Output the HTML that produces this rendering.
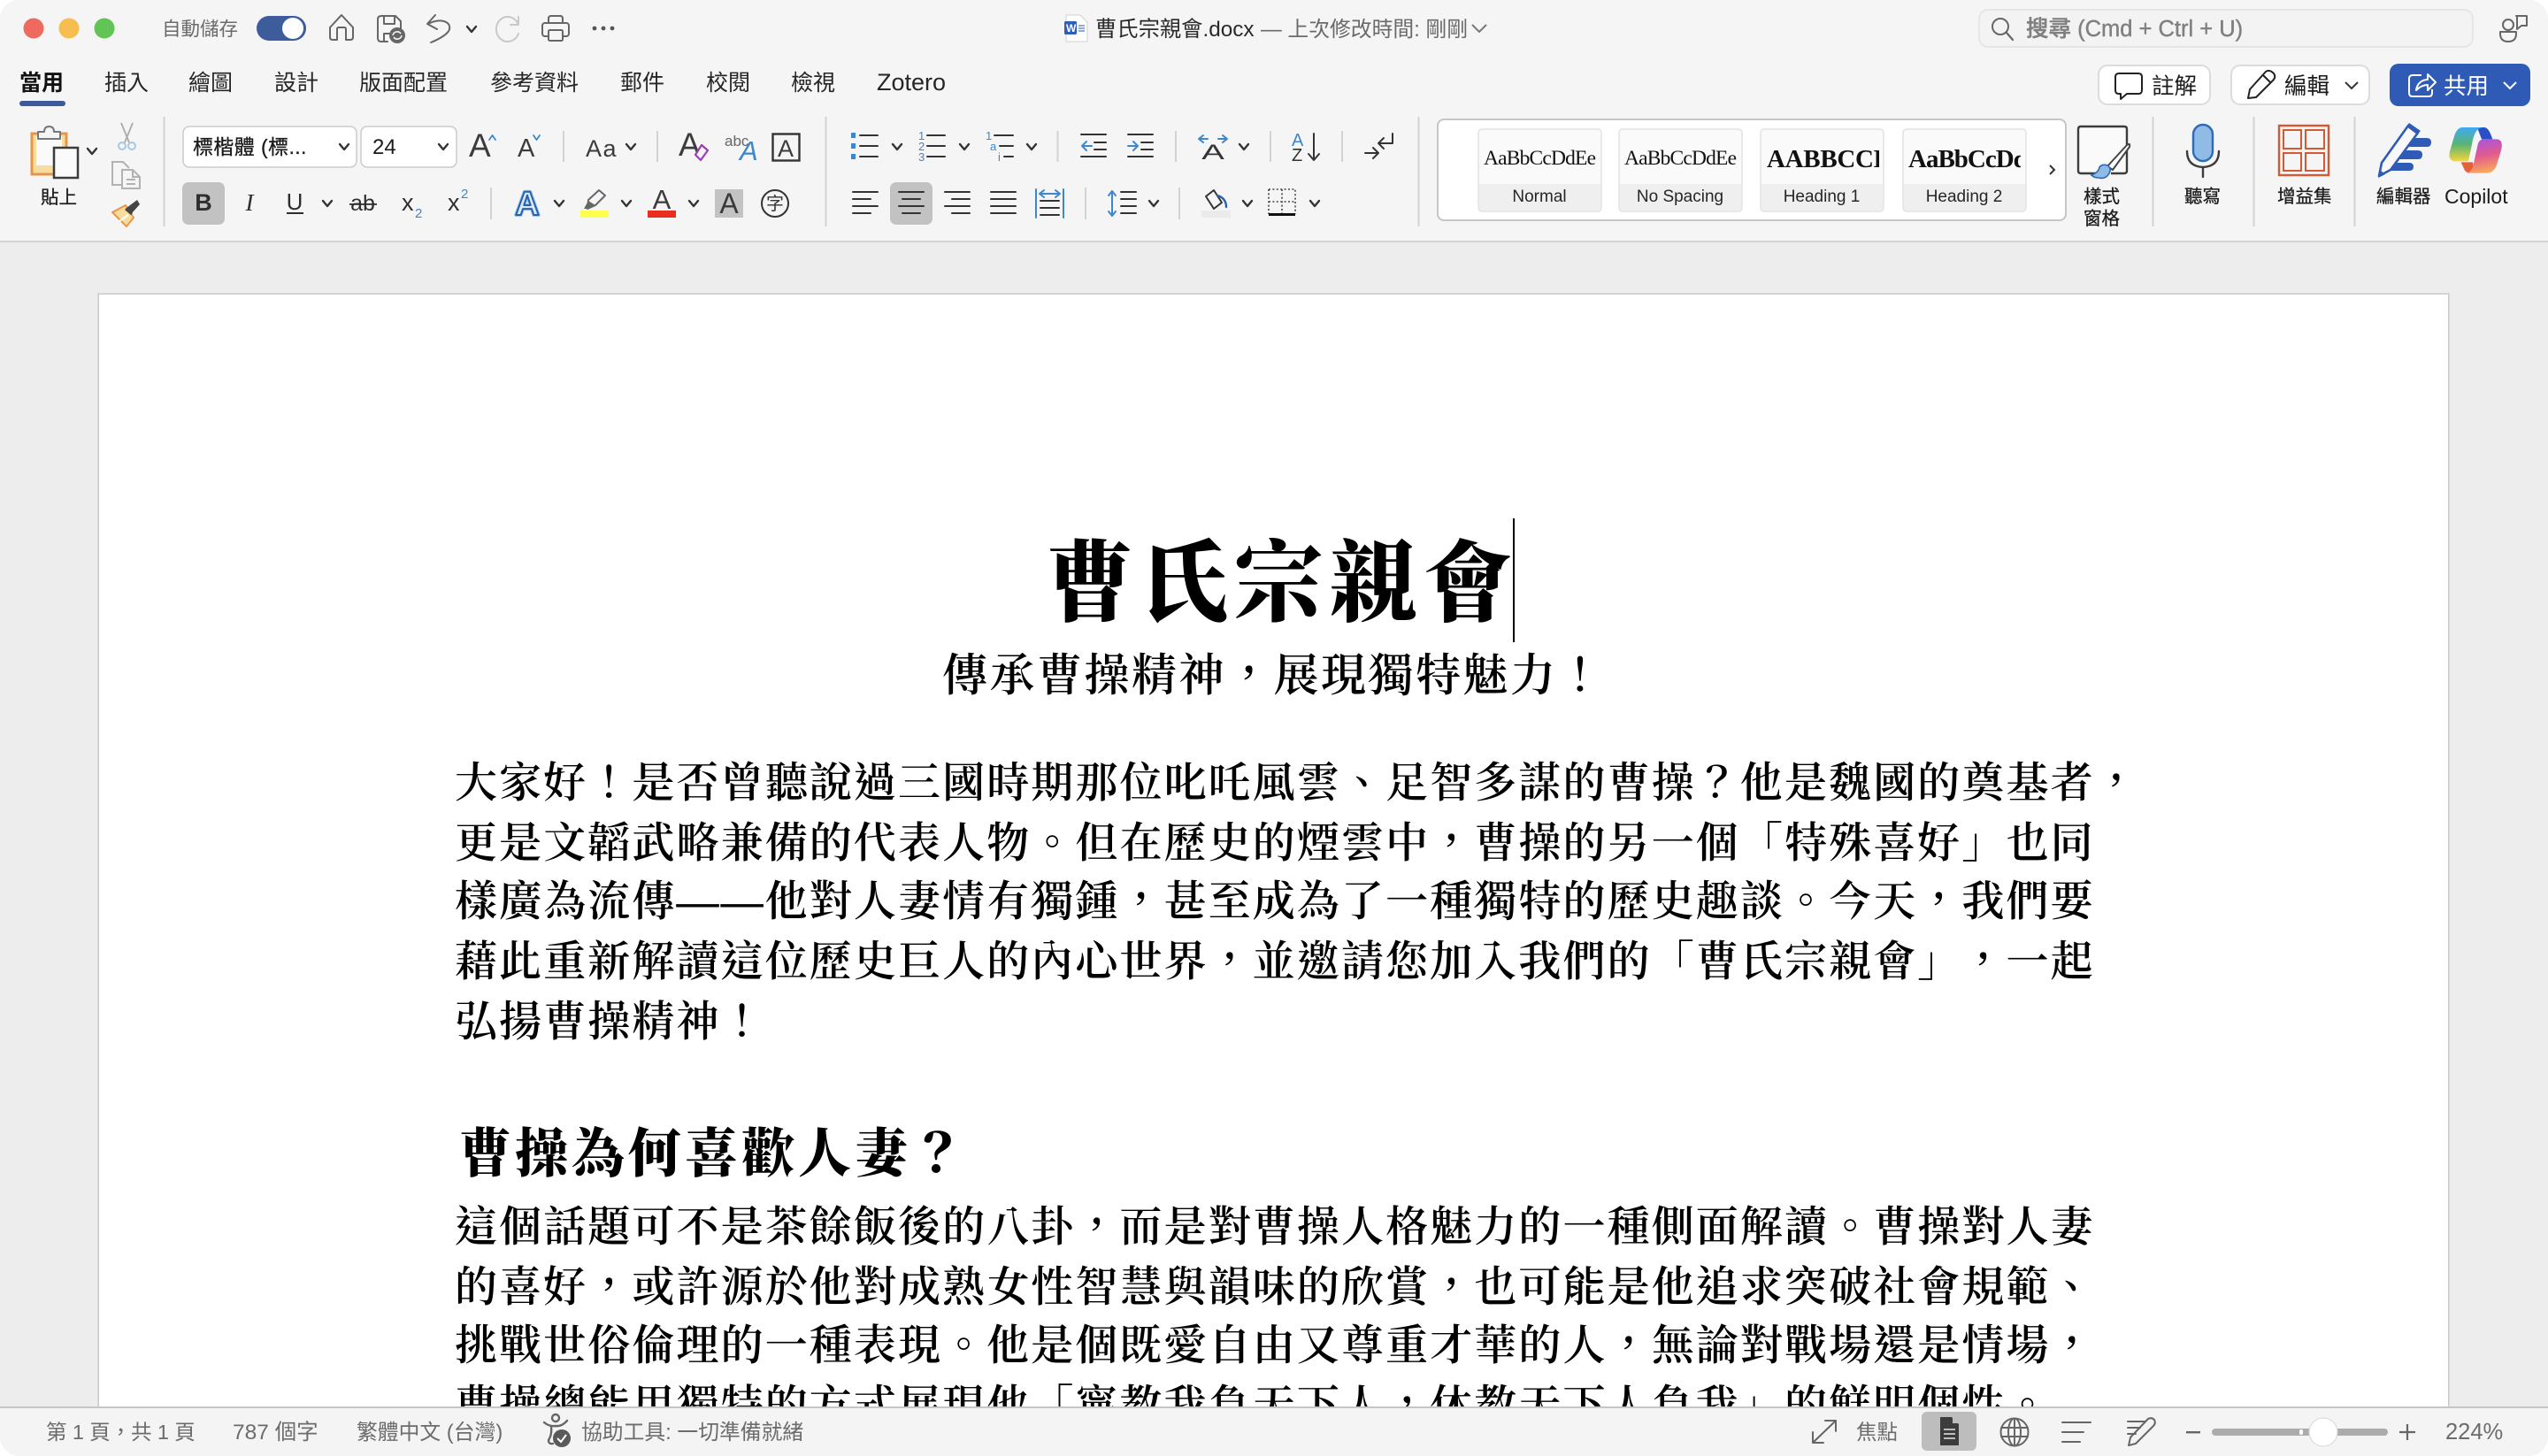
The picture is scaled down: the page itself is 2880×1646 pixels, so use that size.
<!DOCTYPE html>
<html lang="zh-TW">
<head>
<meta charset="utf-8">
<title>曹氏宗親會.docx</title>
<style>
html,body{margin:0;padding:0;width:2880px;height:1646px;overflow:hidden;background:#fff}
#win{position:absolute;left:0;top:0;width:2880px;height:1646px;background:#ededed;border-radius:22px;overflow:hidden}
#page{position:absolute;left:112px;top:333px;width:2655px;height:1300px;background:#fff;box-shadow:0 0 0 1.5px #c9c9c9}
.d{position:absolute;white-space:nowrap;color:#000;font-family:"Liberation Serif","Noto Serif CJK TC","Noto Serif CJK SC",serif;text-spacing-trim:space-all}
.b{font-size:48px;letter-spacing:2.1px;line-height:68px;height:68px;left:514px;font-weight:600}
.h{font-size:60px;letter-spacing:4px;line-height:80px;height:80px;left:518px;font-weight:900}
.ti{font-size:100px;letter-spacing:7px;line-height:130px;height:130px;left:1181px;top:596px;font-weight:900}
.su{font-size:51px;letter-spacing:2.5px;line-height:70px;height:70px;left:1065px;top:730px;font-weight:600}
#caret{position:absolute;left:1710px;top:586px;width:2px;height:140px;background:#000}
#ui{position:absolute;left:0;top:0;width:2880px;height:1646px}
svg text{font-family:"Liberation Sans","Noto Sans CJK TC","Noto Sans CJK SC",sans-serif}
.s{fill:none;stroke:#444;stroke-width:2;stroke-linecap:round;stroke-linejoin:round}
.l{stroke:#d2d2d2;stroke-width:2}
.bl{fill:none;stroke:#3d87cc;stroke-width:2;stroke-linecap:round;stroke-linejoin:round}
</style>
</head>
<body>
<div id="win">
<div id="page"></div>
<div class="d ti">曹氏宗親會</div>
<div id="caret"></div>
<div class="d su">傳承曹操精神，展現獨特魅力！</div>
<div class="d b" style="top:852px">大家好！是否曾聽說過三國時期那位叱吒風雲、足智多謀的曹操？他是魏國的奠基者，</div>
<div class="d b" style="top:920px">更是文韜武略兼備的代表人物。但在歷史的煙雲中，曹操的另一個「特殊喜好」也同</div>
<div class="d b" style="top:986px">樣廣為流傳——他對人妻情有獨鍾，甚至成為了一種獨特的歷史趣談。今天，我們要</div>
<div class="d b" style="top:1054px">藉此重新解讀這位歷史巨人的內心世界，並邀請您加入我們的「曹氏宗親會」，一起</div>
<div class="d b" style="top:1122px">弘揚曹操精神！</div>
<div class="d h" style="top:1265px">曹操為何喜歡人妻？</div>
<div class="d b" style="top:1354px">這個話題可不是茶餘飯後的八卦，而是對曹操人格魅力的一種側面解讀。曹操對人妻</div>
<div class="d b" style="top:1422px">的喜好，或許源於他對成熟女性智慧與韻味的欣賞，也可能是他追求突破社會規範、</div>
<div class="d b" style="top:1488px">挑戰世俗倫理的一種表現。他是個既愛自由又尊重才華的人，無論對戰場還是情場，</div>
<div class="d b" style="top:1556px">曹操總能用獨特的方式展現他「寧教我負天下人，休教天下人負我」的鮮明個性。</div>

<svg id="ui" viewBox="0 0 2880 1646" xmlns="http://www.w3.org/2000/svg">
<defs>
<path id="c" d="M-5 -3L0 3L5 -3" fill="none" stroke="#333" stroke-width="2.4" stroke-linecap="round" stroke-linejoin="round"/>
<linearGradient id="g1" x1="0" y1="0" x2="0" y2="1"><stop offset="0" stop-color="#3fa9f5"/><stop offset=".5" stop-color="#58b472"/><stop offset="1" stop-color="#f6d53c"/></linearGradient>
<linearGradient id="g2" x1="0.3" y1="0" x2="0.5" y2="1"><stop offset="0" stop-color="#a855e0"/><stop offset=".5" stop-color="#e25a8c"/><stop offset="1" stop-color="#f9aa5c"/></linearGradient>
</defs>

<!-- top chrome -->
<rect x="0" y="0" width="2880" height="272" fill="#f5f5f5"/>
<rect x="0" y="272" width="2880" height="2" fill="#d4d4d4"/>

<circle cx="38" cy="32" r="11.5" fill="#ee6a5f"/>
<circle cx="78" cy="32" r="11.5" fill="#f6bd4f"/>
<circle cx="118" cy="32" r="11.5" fill="#61c454"/>
<text x="183" y="40" font-size="21.500" fill="#6a6a6a">自動儲存</text>
<rect x="290" y="18" width="56" height="28" rx="14" fill="#3c5c9c"/>
<circle cx="331" cy="32" r="12" fill="#fff"/>

<path class="s" style="stroke:#666" d="M373 31L386 17L399 31V42Q399 45 396 45H391V33Q391 31 389 31H383Q381 31 381 33V45H376Q373 45 373 42Z"/>
<path class="s" style="stroke:#666" d="M438 47H431Q427 47 427 43V22Q427 18 431 18H447L453 24V32M434 18V27H446V18M434 47V38H440"/>
<circle cx="449" cy="40" r="9" fill="#666"/>
<path d="M444 40a5 5 0 0 1 9-2M454 40a5 5 0 0 1-9 2" fill="none" stroke="#f5f5f5" stroke-width="1.6"/>
<path class="s" style="stroke:#666" d="M492 17L483 27L494 33M484 27C497 20 510 24 508 33C507 38 497 44 487 48"/>
<use href="#c" x="533" y="33"/>
<path class="s" style="stroke:#c9c9c9" d="M586 28A13 14 0 1 0 586 38M586 19V28H577"/>
<g class="s" style="stroke:#666"><path d="M620 26V21Q620 18 623 18H633Q636 18 636 21V26"/><rect x="613" y="26" width="30" height="15" rx="3"/><rect x="620" y="34" width="16" height="12" rx="1.5" fill="#f5f5f5"/></g>
<circle cx="672" cy="32" r="2.4" fill="#555"/><circle cx="682" cy="32" r="2.4" fill="#555"/><circle cx="692" cy="32" r="2.4" fill="#555"/>

<!-- title -->
<path d="M1205 17H1221L1229 25V47H1205Z" fill="#fff" stroke="#d0d0d0" stroke-width="1"/>
<rect x="1203" y="24" width="14" height="15" rx="1.5" fill="#2f5fbe"/>
<text x="1205" y="36" font-size="12" font-weight="bold" fill="#fff">W</text>
<path d="M1219 29H1226M1219 32H1226M1219 35H1226" stroke="#4a78c8" stroke-width="1.2"/>
<text x="1238" y="41" font-size="24.300" fill="#2a2a2a">曹氏宗親會.docx</text>
<text x="1425" y="41" font-size="23.800" fill="#6a6a6a">— 上次修改時間: 剛剛</text>
<path d="M1664 28L1672 36L1680 28" fill="none" stroke="#777" stroke-width="2"/>

<!-- search -->
<rect x="2237" y="11" width="558" height="42" rx="10" fill="#f3f3f3" stroke="#e6e6e6" stroke-width="2"/>
<circle cx="2261" cy="30" r="9" fill="none" stroke="#666" stroke-width="2"/>
<path d="M2268 37L2275 45" stroke="#666" stroke-width="2.2" stroke-linecap="round"/>
<text x="2290" y="41" font-size="25.500" font-weight="500" fill="#808080" stroke="#808080" stroke-width=".4">搜尋 (Cmd + Ctrl + U)</text>
<g class="s" style="stroke:#666"><circle cx="2835" cy="28" r="6"/><path d="M2826 36H2844V38Q2844 47 2835 47Q2826 47 2826 38Z"/><path d="M2844 18H2856V29H2850L2845 33V18Z"/></g>

<!-- tabs -->
<g font-size="25" fill="#262626">
<text x="22" y="102" font-weight="700" fill="#111">當用</text>
<text x="118" y="102">插入</text>
<text x="213" y="102">繪圖</text>
<text x="310" y="102">設計</text>
<text x="406" y="102">版面配置</text>
<text x="554" y="102">參考資料</text>
<text x="701" y="102">郵件</text>
<text x="798" y="102">校閱</text>
<text x="894" y="102">檢視</text>
<text x="991" y="102" font-size="27">Zotero</text>
</g>
<rect x="22" y="114" width="52" height="6" rx="3" fill="#3b5a9c"/>

<!-- right buttons -->
<rect x="2372" y="74" width="126" height="44" rx="10" fill="#fff" stroke="#dcdcdc" stroke-width="2"/>
<path class="s" style="stroke:#222" d="M2395 83H2417Q2421 83 2421 87V102Q2421 106 2417 106H2404L2397 112V106H2395Q2391 106 2391 102V87Q2391 83 2395 83Z"/>
<text x="2432" y="106" font-size="25.500" fill="#1c1c1c">註解</text>
<rect x="2522" y="74" width="156" height="44" rx="10" fill="#fff" stroke="#dcdcdc" stroke-width="2"/>
<path class="s" style="stroke:#222" d="M2541 111L2543 101L2561 81Q2565 78 2570 83Q2573 87 2569 91L2550 110ZM2558 85L2566 93"/>
<text x="2582" y="106" font-size="25.500" fill="#1c1c1c">編輯</text>
<path d="M2651 93L2658 100L2665 93" fill="none" stroke="#333" stroke-width="2"/>
<rect x="2701" y="72" width="159" height="48" rx="10" fill="#2f5bb7"/>
<path d="M2737 85H2727Q2723 85 2723 89V105Q2723 109 2727 109H2745Q2749 109 2749 105V101M2731 102C2732 94 2738 90 2744 90V84L2753 93L2744 102V96C2739 96 2735 98 2731 102Z" fill="none" stroke="#fff" stroke-width="2" stroke-linejoin="round"/>
<text x="2762" y="106" font-size="25.500" fill="#fff">共用</text>
<path d="M2830 93L2837 100L2844 93" fill="none" stroke="#fff" stroke-width="2"/>

<!-- separators -->
<g class="l">
<path d="M185.5 132V256M933.5 132V256M1603.5 132V256M2433.5 132V256M2547.5 132V256M2661.5 132V256"/>
<path d="M637 148V183M743 148V183M1195.5 148V183M1329 148V183M1436 148V183M1517 148V183M555 212V248M1227 212V248M1333 212V248"/>
</g>

<!-- paste -->
<rect x="36" y="151" width="39" height="46" fill="#f8dc9c" stroke="#e5964a" stroke-width="3"/>
<rect x="41" y="154" width="29" height="33" fill="#fafafa"/>
<path d="M43 157V149H50Q50 143 55.5 143Q61 143 61 149H68V157Z" fill="#f5f5f5" stroke="#777" stroke-width="2" stroke-linejoin="round"/>
<rect x="61" y="167" width="27" height="34" fill="#fafafa" stroke="#3c3c3c" stroke-width="2.5"/>
<use href="#c" x="104" y="171"/>
<text x="46" y="230" font-size="20.500" fill="#1c1c1c" stroke="#1c1c1c" stroke-width=".3">貼上</text>
<path d="M137 139L146 161M150 139L141 161" fill="none" stroke="#aaa" stroke-width="1.8"/>
<circle cx="138" cy="165" r="4" fill="none" stroke="#a8c8e6" stroke-width="2"/><circle cx="149" cy="165" r="4" fill="none" stroke="#a8c8e6" stroke-width="2"/>
<path d="M139 209H127V183H139L146 190M138 192H150L158 200V213H138Z M150 192V200H158M143 203H153M143 208H153" fill="#f5f5f5" stroke="#b2b2b2" stroke-width="2"/>
<path d="M127 240L142 232L151 246L143 256Z" fill="#f9dc9c" stroke="#e5964a" stroke-width="2" stroke-linejoin="round"/>
<path d="M135 250L145 243" stroke="#fff" stroke-width="2"/>
<path d="M143 235L155 226L158 231L149 241Z" fill="#444"/><path d="M142 236L149 242" stroke="#444" stroke-width="3"/>

<!-- font boxes -->
<rect x="207" y="143" width="196" height="46" rx="7" fill="#fff" stroke="#cbcbcb" stroke-width="1.5"/>
<text x="218" y="174" font-size="23" fill="#1a1a1a" stroke="#1a1a1a" stroke-width=".3" letter-spacing=".4">標楷體 (標...</text>
<use href="#c" x="389" y="166"/>
<rect x="408" y="143" width="108" height="46" rx="7" fill="#fff" stroke="#cbcbcb" stroke-width="1.5"/>
<text x="421" y="174" font-size="24" fill="#1a1a1a">24</text>
<use href="#c" x="501" y="166"/>

<g fill="#3c3c3c" font-weight="400">
<text x="530" y="177" font-size="37">A</text>
<path d="M553 158L556.5 153L560 158" class="bl" style="stroke-width:1.8"/>
<text x="585" y="177" font-size="29">A</text>
<path d="M603 153L606.5 158L610 153" class="bl" style="stroke-width:1.8"/>
<text x="662" y="177" font-size="27" letter-spacing="1.5">Aa</text>
<use href="#c" x="713" y="166"/>
<text x="767" y="176" font-size="37">A</text>
<path d="M786 175L793 164L800 170L792 181Z" fill="#f5f5f5" stroke="#9a3fb5" stroke-width="2.2" stroke-linejoin="round"/>
<text x="819" y="165" font-size="17" fill="#666">abc</text>
<text x="836" y="181" font-size="31" font-style="italic" fill="#3d87cc">A</text>
<rect x="873.5" y="151.5" width="30" height="30" fill="none" stroke="#333" stroke-width="2.4"/>
<text x="879" y="177" font-size="27">A</text>
</g>

<rect x="206" y="206" width="48" height="48" rx="7" fill="#c2c2c2"/>
<g fill="#2e2e2e">
<text x="230" y="238" font-size="27" font-weight="700" text-anchor="middle">B</text>
<text x="282" y="238" font-size="27" font-style="italic" text-anchor="middle" style="font-family:'Liberation Serif',serif">I</text>
<text x="333" y="237" font-size="26" text-anchor="middle">U</text>
<rect x="324" y="240" width="19" height="2"/>
<use href="#c" x="370" y="230"/>
<text x="410" y="238" font-size="25" text-anchor="middle">ab</text>
<rect x="395" y="230" width="31" height="1.8"/>
<text x="454" y="238" font-size="27">x</text>
<text x="469" y="246" font-size="15" fill="#3d87cc">2</text>
<text x="506" y="238" font-size="27">x</text>
<text x="521" y="224" font-size="15" fill="#3d87cc">2</text>
</g>
<text x="596" y="243" font-size="38" font-weight="700" text-anchor="middle" fill="#9fc5ea" stroke="#9fc5ea" stroke-width="4" stroke-linejoin="round">A</text>
<text x="596" y="243" font-size="38" font-weight="700" text-anchor="middle" fill="#dbe9f7" stroke="#2661b0" stroke-width="2" stroke-linejoin="round">A</text>
<use href="#c" x="632" y="230"/>
<path d="M664 236L665 226L677 215L684 221L673 232Z" fill="#f5f5f5" stroke="#666" stroke-width="2" stroke-linejoin="round"/><path d="M660 236L665 227L673 232L666 236Z" fill="#666"/>
<rect x="656" y="238" width="32" height="8" fill="#ffff50"/>
<use href="#c" x="708" y="230"/>
<text x="748" y="236" font-size="31" text-anchor="middle" fill="#3c3c3c">A</text>
<rect x="732" y="238" width="32" height="8" fill="#e92e20"/>
<use href="#c" x="784" y="230"/>
<rect x="808" y="214" width="32" height="32" fill="#c3c3c3"/>
<text x="824" y="241" font-size="32" text-anchor="middle" fill="#3a3a3a">A</text>
<circle cx="876" cy="230" r="15" fill="none" stroke="#333" stroke-width="2"/>
<text x="876" y="237" font-size="20" text-anchor="middle" fill="#333">字</text>

<!-- lists -->
<g fill="#3d87cc">
<rect x="962" y="150" width="5" height="6"/><rect x="962" y="162" width="5" height="6"/><rect x="962" y="174" width="5" height="6"/>
</g>
<path d="M972 153H992M972 165H992M972 177H992" class="s" style="stroke:#333"/>
<use href="#c" x="1014" y="166"/>
<g fill="#3d87cc" font-size="13"><text x="1038" y="158">1</text><text x="1038" y="170">2</text><text x="1038" y="182">3</text></g>
<path d="M1048 153H1068M1048 165H1068M1048 177H1068" class="s" style="stroke:#333"/>
<use href="#c" x="1090" y="166"/>
<g fill="#3d87cc" font-size="13"><text x="1114" y="158">1</text><text x="1119" y="170">a</text><text x="1128" y="182">i</text></g>
<path d="M1124 153H1145M1130 165H1145M1135 177H1145" class="s" style="stroke:#333"/>
<use href="#c" x="1166" y="166"/>
<path d="M1222 152H1250M1237 161H1250M1237 169H1250M1222 177H1250" class="s" style="stroke:#333"/>
<path d="M1234 165H1224M1228 160L1223 165L1228 170" class="bl"/>
<path d="M1275 152H1303M1290 161H1303M1290 169H1303M1275 177H1303" class="s" style="stroke:#333"/>
<path d="M1275 165H1285M1281 160L1286 165L1281 170" class="bl"/>
<path d="M1365 157H1356M1360 153L1355 157L1360 161M1377 157H1386M1382 153L1387 157L1382 161" class="bl"/>
<text transform="translate(1371 180) scale(1.6 1)" font-size="24" text-anchor="middle" fill="#333">A</text>
<use href="#c" x="1406" y="166"/>
<text x="1460" y="165" font-size="20" fill="#3d87cc">A</text>
<text x="1460" y="182" font-size="20" fill="#333">Z</text>
<path d="M1485 151V180M1479 174L1485 181L1491 174" class="s" style="stroke:#333"/>
<path d="M1543 173H1558M1552 167L1558 173L1552 179M1574 151V162H1558M1564 156L1558 162L1564 168" class="s" style="stroke:#333"/>

<!-- align -->
<rect x="1006" y="206" width="48" height="48" rx="7" fill="#c2c2c2"/>
<path class="s" style="stroke:#333" d="M964 217H992M964 225H984M964 233H992M964 241H984M1016 217H1044M1020 225H1040M1016 233H1044M1020 241H1040M1068 217H1096M1076 225H1096M1068 233H1096M1076 241H1096M1120 217H1148M1120 225H1148M1120 233H1148M1120 241H1148"/>
<path class="bl" d="M1171 214V246M1202 214V246M1176 219H1197M1180 215L1175 219L1180 223M1193 215L1198 219L1193 223"/>
<path class="s" style="stroke:#333" d="M1176 227H1197M1176 235H1197M1176 243H1197"/>
<path class="bl" d="M1257 216V244M1253 221L1257 216L1261 221M1253 239L1257 244L1261 239"/>
<path class="s" style="stroke:#333" d="M1267 217H1284M1267 225H1284M1267 233H1284M1267 241H1284"/>
<use href="#c" x="1304" y="230"/>
<rect x="1358" y="238" width="33" height="8" fill="#ebebeb"/>
<path class="s" style="stroke:#333" d="M1363 222L1372 215L1381 229L1372 236Z"/>
<path class="bl" style="stroke:#2661b0;stroke-width:2.4" d="M1376 221Q1386 224 1386 234"/>
<use href="#c" x="1410" y="230"/>
<path d="M1434 214H1464V242M1434 214V242M1449 214V242M1434 228H1464" fill="none" stroke="#444" stroke-width="1.6" stroke-dasharray="2 2.4"/>
<rect x="1434" y="241" width="30" height="3" fill="#111"/>
<use href="#c" x="1486" y="230"/>

<!-- gallery -->
<rect x="1625" y="135" width="710" height="114" rx="7" fill="#fff" stroke="#c6c6c6" stroke-width="2"/>
<g>
<rect x="1671" y="146" width="139" height="93" rx="4" fill="#fafafa" stroke="#e2e2e2" stroke-width="1.5"/>
<path d="M1672 208H1809V235Q1809 238 1806 238H1675Q1672 238 1672 235Z" fill="#efefef"/>
<rect x="1830" y="146" width="139" height="93" rx="4" fill="#fafafa" stroke="#e2e2e2" stroke-width="1.5"/>
<path d="M1831 208H1968V235Q1968 238 1965 238H1834Q1831 238 1831 235Z" fill="#efefef"/>
<rect x="1990" y="146" width="139" height="93" rx="4" fill="#fafafa" stroke="#e2e2e2" stroke-width="1.5"/>
<path d="M1991 208H2128V235Q2128 238 2125 238H1994Q1991 238 1991 235Z" fill="#efefef"/>
<rect x="2151" y="146" width="139" height="93" rx="4" fill="#fafafa" stroke="#e2e2e2" stroke-width="1.5"/>
<path d="M2152 208H2289V235Q2289 238 2286 238H2155Q2152 238 2152 235Z" fill="#efefef"/>
</g>
<g fill="#111">
<text x="1677" y="186" font-size="23.5" textLength="127" style="font-family:'Liberation Serif',serif">AaBbCcDdEe</text>
<text x="1836" y="186" font-size="23.5" textLength="127" style="font-family:'Liberation Serif',serif">AaBbCcDdEe</text>
<svg x="1995" y="150" width="129" height="50" viewBox="1995 150 129 50"><text x="1997" y="189" font-size="29" letter-spacing="-.3" font-weight="700" style="font-family:'Liberation Serif',serif">AABBCCD</text></svg>
<svg x="2155" y="150" width="129" height="50" viewBox="2155 150 129 50"><text x="2157" y="189" font-size="29" letter-spacing="-1" font-weight="700" style="font-family:'Liberation Serif',serif">AaBbCcDdEe</text></svg>
</g>
<g font-size="19" fill="#262626" text-anchor="middle">
<text x="1740" y="228">Normal</text>
<text x="1899" y="228">No Spacing</text>
<text x="2059" y="228">Heading 1</text>
<text x="2220" y="228">Heading 2</text>
</g>
<path d="M2317 187L2322 192L2317 197" fill="none" stroke="#333" stroke-width="2"/>

<!-- style pane -->
<path d="M2372 196H2352Q2349 196 2349 193V146Q2349 143 2352 143H2401Q2404 143 2404 146V193Q2404 196 2401 196H2386" fill="#fafafa" stroke="#3c3c3c" stroke-width="2.4"/>
<path d="M2382 188L2404 164Q2408 161 2407 166L2388 192Z" fill="#fff" stroke="#444" stroke-width="2" stroke-linejoin="round"/>
<path d="M2364 198Q2372 195 2373 189Q2376 185 2382 187Q2387 190 2384 196Q2380 203 2372 201Q2367 201 2364 198Z" fill="#8fbbe6" stroke="#2f6ab5" stroke-width="1.6"/>
<g font-size="20.500" fill="#1c1c1c" stroke="#1c1c1c" stroke-width=".3">
<text x="2355" y="229">樣式</text>
<text x="2355" y="254">窗格</text>
<text x="2469" y="229">聽寫</text>
<text x="2574" y="229">增益集</text>
<text x="2686" y="229">編輯器</text>
<text x="2763" y="230" font-size="23" stroke="none">Copilot</text>
</g>

<!-- mic -->
<rect x="2479" y="141" width="22" height="41" rx="11" fill="#8fbbe6" stroke="#2f6ab5" stroke-width="2.4"/>
<path d="M2472 171Q2472 188 2490 189Q2508 188 2508 171M2490 189V200" fill="none" stroke="#3c3c3c" stroke-width="2.4" stroke-linecap="round"/>

<!-- add-ins -->
<rect x="2576" y="142" width="56" height="56" fill="none" stroke="#d35a34" stroke-width="2.4"/>
<g fill="none" stroke="#d35a34" stroke-width="2"><rect x="2581" y="147" width="20" height="21"/><rect x="2606" y="147" width="21" height="21"/><rect x="2581" y="173" width="20" height="20"/><rect x="2606" y="173" width="21" height="20"/></g>

<!-- editor -->
<g fill="#2f5bb7">
<path d="M2718 156H2743Q2748 156 2748 161Q2748 166 2743 166H2712Z"/>
<path d="M2708 170H2733Q2738 170 2738 175Q2738 180 2733 180H2702Z"/>
<path d="M2698 184H2723Q2728 184 2728 188.500Q2728 193 2723 193H2693Z"/>
</g>
<path d="M2689 199L2692 184L2722 142L2733 150L2702 192Z" fill="#f8f8f8" stroke="#2f5bb7" stroke-width="2.6" stroke-linejoin="round"/>
<path d="M2723 139L2736 148L2732 152L2720 143Z" fill="#2f5bb7"/>
<path d="M2688 201L2690 192L2696 197Z" fill="#2f5bb7"/>

<!-- copilot -->
<g transform="translate(2680 130) scale(.3333)">
<path d="M360 42H385C398 44 405 62 412 82H375Z" fill="#2a4fc6"/>
<path d="M305 160H345L350 190C340 198 325 198 318 188Z" fill="#e2603a"/>
<path d="M310 42H378C355 46 348 68 342 100L330 157H285C266 157 262 140 268 120L282 72C288 54 296 42 310 42Z" fill="url(#g1)"/>
<path d="M382 82H425C445 82 446 100 441 120L426 170C418 192 404 197 388 197H322C340 195 346 178 351 150L362 100C365 88 372 82 382 82Z" fill="url(#g2)"/>
</g>

<!-- status bar -->
<rect x="0" y="1590" width="2880" height="56" fill="#f4f4f4"/>
<rect x="0" y="1590" width="2880" height="2" fill="#c6c6c6"/>
<g font-size="23.500" fill="#6c6c6c">
<text x="52" y="1627" letter-spacing="-.1">第 1 頁，共 1 頁</text>
<text x="263" y="1627" font-size="24.500">787 個字</text>
<text x="403" y="1627" font-size="23.800">繁體中文 (台灣)</text>
<text x="657" y="1627" font-size="23.800">協助工具: 一切準備就緒</text>
<text x="2098" y="1627">焦點</text>
<text x="2764" y="1627" font-size="25.500">224%</text>
</g>
<g fill="none" stroke="#666" stroke-width="2.4" stroke-linecap="round">
<circle cx="628" cy="1603" r="4"/>
<path d="M615 1608Q621 1613 628 1612Q635 1613 641 1606M623 1613Q624 1622 620 1628Q620 1633 625 1632"/>
</g>
<circle cx="635" cy="1626" r="10" fill="#5a5a5a"/>
<path d="M630 1626L634 1630L640 1622" fill="none" stroke="#fff" stroke-width="2"/>

<path d="M2049 1631L2075 1606M2049 1619V1631H2061M2063 1606H2075V1618" class="s" style="stroke:#666"/>
<rect x="2172" y="1596" width="62" height="44" rx="6" fill="#bdbdbd"/>
<path d="M2193 1602H2206L2214 1610V1634H2193Z" fill="#3c3c3c"/>
<path d="M2207 1602L2214 1609H2207Z" fill="#bdbdbd"/>
<path d="M2197 1616H2210M2197 1621H2210M2197 1626H2210" stroke="#bdbdbd" stroke-width="2"/>
<g class="s" style="stroke:#666">
<circle cx="2277" cy="1619" r="15.5"/>
<ellipse cx="2277" cy="1619" rx="7" ry="15.500"/>
<path d="M2262 1614H2292M2262 1624H2292M2277 1604V1634"/>
<path d="M2331 1608H2363M2331 1619H2355M2331 1630H2351"/>
<path d="M2405 1607H2424M2405 1614H2419M2405 1621H2414M2406 1634L2408 1625L2428 1604Q2432 1602 2435 1605Q2437 1609 2434 1612L2414 1632Z"/>
</g>
<rect x="2471" y="1618" width="16" height="2.400" fill="#666"/>
<rect x="2500" y="1615" width="199" height="8" rx="4" fill="#acacac"/>
<rect x="2599" y="1616" width="4" height="6" rx="2" fill="#fff"/>
<circle cx="2626" cy="1619" r="16" fill="#fff" stroke="#d6d6d6" stroke-width="1"/>
<path d="M2712 1619H2730M2721 1610V1628" stroke="#666" stroke-width="2.2"/>
</svg>
</div>
</body>
</html>
